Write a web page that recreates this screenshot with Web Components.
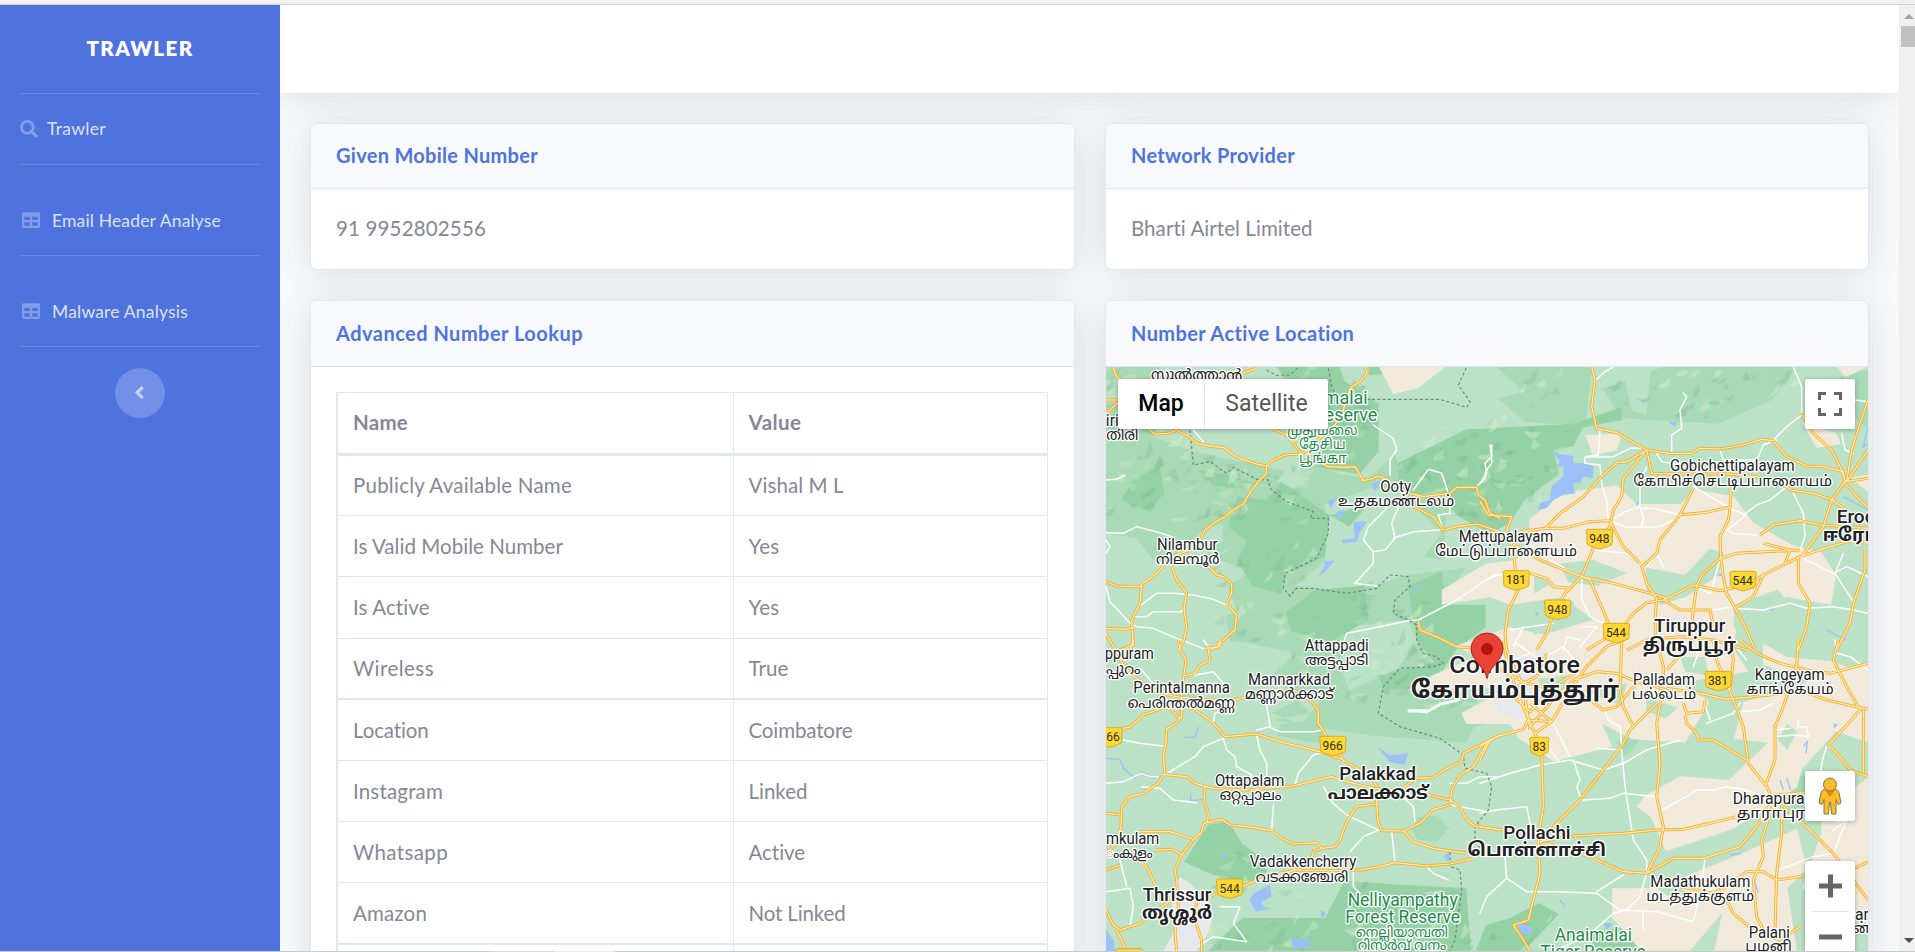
<!DOCTYPE html>
<html lang="en">
<head>
<meta charset="utf-8">
<title>Trawler</title>
<style>
html,body{margin:0;height:100%;overflow:hidden;background:#f8f9fc}
body{font:20.500px/30px Lato,"Liberation Sans",sans-serif;color:#858796}
</style>
</head>
<body>
<app-shell>
  <side-bar slot="nav"></side-bar>
  <info-card slot="cards" heading="Given Mobile Number" hw="202"><fit-text w="150">91 9952802556</fit-text></info-card>
  <info-card slot="cards" heading="Network Provider" hw="164"><fit-text w="182">Bharti Airtel Limited</fit-text></info-card>
  <info-card slot="cards" heading="Advanced Number Lookup" hw="247" tall><lookup-table></lookup-table></info-card>
  <info-card slot="cards" heading="Number Active Location" hw="224" flush tall><area-map></area-map></info-card>
</app-shell>

<template id="t-shell">
<style>
:host{display:flex;flex-direction:column;height:100vh;width:100vw}
.strip{height:4px;flex:none;background:#f3f1ef;border-bottom:1px solid #cfd4dc}
.row{flex:1;display:flex;min-height:0}
main{flex:1;min-width:0;display:flex;flex-direction:column;background:#f8f9fc;overflow:hidden}
header{height:88px;flex:none;background:#fff;box-shadow:0 3px 35px rgba(58,59,69,.15)}
.cards{display:grid;grid-template-columns:765px 764px;grid-template-rows:147px 740px;gap:30px;padding:30px 30px 0;flex:none}
.bar{width:16px;flex:none;background:#f0f0f0;display:flex;flex-direction:column;align-items:flex-end}
.bar i{display:block;border:5px solid transparent;margin-right:1px;width:0;height:0}
.up{border-bottom-color:#a3a3a3!important;border-top:0!important;margin-top:9px}
.dn{border-top-color:#505050!important;border-bottom:0!important;margin-top:auto;margin-bottom:8px}
.thumb{width:14px;height:21px;background:#c1c1c1;margin-top:7px}
.foot{height:1px;flex:none;background:linear-gradient(90deg,#c9cacd 0 490px,#d8d8da 490px 554px,#ececec 554px 615px,#c9cacd 615px)}
</style>
<div class="strip"></div>
<div class="row"><slot name="nav"></slot>
<main><header></header><div class="cards"><slot name="cards"></slot></div></main>
<div class="bar"><i class="up"></i><div class="thumb"></div><i class="dn"></i></div></div>
<div class="foot"></div>
</template>

<template id="t-side">
<style>
:host{display:flex;flex-direction:column;width:280px;flex:none;background:#4e73df;z-index:2;position:relative;font-size:17.500px;color:#dbe2f8}
.brand{height:86px;padding-bottom:2px;display:flex;align-items:center;justify-content:center;color:#fff;font-weight:800;font-size:20.500px}
hr{border:0;height:1px;width:240px;margin:0 auto;background:#6988e4;flex:none}
nav-item{height:70px}
nav-item.t{height:69px;padding-top:21px}
button{all:unset;width:50px;height:50px;border-radius:50%;background:#7190e6;margin:21px auto 0;display:flex;align-items:center;justify-content:center}
button svg{margin:-2px 2px 0 0}
</style>
<div class="brand"><fit-text w="107">TRAWLER</fit-text></div><hr>
<nav-item><svg slot="icon" style="margin:-1px 9px 0 0" width="18" height="18" viewBox="0 0 512 512" fill="#839de8"><path d="M505 442.700 405.300 343c-4.500-4.500-10.600-7-17-7H372c27.600-35.300 44-79.700 44-128C416 93.100 322.900 0 208 0S0 93.100 0 208s93.100 208 208 208c48.300 0 92.700-16.400 128-44v16.300c0 6.400 2.500 12.500 7 17l99.700 99.700c9.400 9.400 24.600 9.400 33.900 0l28.300-28.300c9.400-9.400 9.400-24.600.1-34zM208 336c-70.700 0-128-57.200-128-128 0-70.700 57.200-128 128-128 70.700 0 128 57.200 128 128 0 70.700-57.200 128-128 128z"/></svg><fit-text w="59">Trawler</fit-text></nav-item><hr>
<nav-item class="t"><svg slot="icon" style="margin:-2px 12px 0 2px" width="18" height="18" viewBox="0 0 512 512" fill="#839de8"><path d="M464 32H48C21.500 32 0 53.500 0 80v352c0 26.500 21.500 48 48 48h416c26.500 0 48-21.500 48-48V80c0-26.500-21.500-48-48-48zM224 416H64v-96h160v96zm0-160H64v-96h160v96zm224 160H288v-96h160v96zm0-160H288v-96h160v96z"/></svg><fit-text w="169">Email Header Analyse</fit-text></nav-item><hr>
<nav-item class="t"><svg slot="icon" style="margin:-2px 12px 0 2px" width="18" height="18" viewBox="0 0 512 512" fill="#839de8"><path d="M464 32H48C21.500 32 0 53.500 0 80v352c0 26.500 21.500 48 48 48h416c26.500 0 48-21.500 48-48V80c0-26.500-21.500-48-48-48zM224 416H64v-96h160v96zm0-160H64v-96h160v96zm224 160H288v-96h160v96zm0-160H288v-96h160v96z"/></svg><fit-text w="136">Malware Analysis</fit-text></nav-item><hr>
<button aria-label="Collapse"><svg width="11" height="15" viewBox="0 0 11 15"><path d="M8.700 2 3.200 7.500 8.700 13" fill="none" stroke="#c2cff5" stroke-width="3.300"/></svg></button>
</template>

<template id="t-item"><style>:host{display:flex;align-items:center;padding:0 20px;flex:none;white-space:nowrap}</style><slot name="icon"></slot><slot></slot></template>

<template id="t-card">
<style>
:host{display:flex;flex-direction:column;box-sizing:border-box;background:#fff;border:1px solid #e3e6f0;border-radius:7px;box-shadow:0 3px 35px rgba(58,59,69,.15);overflow:hidden;min-width:0}
h6{margin:0;height:64px;line-height:63px;flex:none;padding:0 25px;background:#f8f9fc;border-bottom:1px solid #e0e3f1;color:#4e73df;font-size:20px;font-weight:700}
:host([tall]) h6{height:65px;line-height:65px}
.b{padding:24px 25px}
:host([flush]) .b{padding:0}
</style><h6><fit-text></fit-text></h6><div class="b"><slot></slot></div>
</template>

<template id="t-table">
<style>
:host{display:block}
table{border-collapse:collapse;width:712px;table-layout:fixed;margin:1px 0 0 0;border-left:2px solid #e3e6f0}
th,td{border:1px solid #e3e6f0;text-align:left;padding:0 15px;box-sizing:border-box;height:61.200px;line-height:30px}
td{padding-bottom:1px}
th{height:62px;padding-bottom:2px;border-bottom:3px solid #e3e6f0}
col:first-child{width:396px}
tr.k td{border-bottom-width:2px}
</style>
<table><colgroup><col><col></colgroup><thead><tr><th><fit-text w="55">Name</fit-text></th><th><fit-text w="53">Value</fit-text></th></tr></thead><tbody></tbody></table>
</template>

<template id="t-map">
<style>
:host{display:block;position:relative;width:763px;height:584px;overflow:hidden;font-family:Roboto,sans-serif}
svg.m{display:block;width:762px;height:584px;background:#bbe2c6}
.ctl{position:absolute;background:#fff;border-radius:2.500px;box-shadow:0 1px 5px rgba(0,0,0,.3);box-sizing:border-box}
.type{left:12px;top:12px;width:210px;height:50px;display:flex;font-size:23px;line-height:50px;color:#565656;text-align:center}
.type b{font-weight:500;color:#000;width:87px;border-right:1px solid #e6e6e6;box-sizing:border-box}
.type span{flex:1}
.sq{right:14px;width:50px;height:50px;display:flex;align-items:center;justify-content:center}
.zoom{right:14px;top:494px;width:50px;height:101px}
.zoom svg{display:block}
.bg{fill:#f1e9da}.l{fill:#bbe2c6}.md{fill:#a8dab5}.dk{fill:#94d2a5}.w{fill:#9cc0f9}.u{fill:#e6e8ec}
.wr{fill:none;stroke:#fdfffd;stroke-width:4.500;stroke-linejoin:round;stroke-linecap:round}
.br{fill:none;stroke:#71867a;stroke-width:3.500;stroke-dasharray:9 7}
.rv{fill:none;stroke:#9cc0f9;stroke-width:4}
text{paint-order:stroke;stroke:#fff;stroke-width:8px;stroke-linejoin:round;fill:#202124;font-family:Roboto,"Noto Sans Tamil","Noto Sans Malayalam","Noto Sans",sans-serif;font-size:47px;text-anchor:middle}
.in{font-size:44px}
.b{font-weight:500;font-size:57px}
.bi{font-weight:700;font-size:54px}
.g{fill:#1f8a4c;font-size:54px}
.gi{fill:#1f8a4c;font-size:42px}
.sh{font-size:36px;stroke:none;font-weight:400;fill:#33301c}
</style>
<svg class="m" viewBox="78 51 2286 1752" preserveAspectRatio="none">
<defs>
<pattern id="p" width="760" height="560" patternUnits="userSpaceOnUse"></pattern>
<g id="rd">
<g><path d="M98 51 110 80 125 90M78 150H120M78 190 115 158M208 238 225 252 265 250 290 240 330 262 350 280 400 290 430 292 460 315 480 325 530 342 560 348 580 330 615 315 665 312 690 295M560 348 558 372 535 395 510 428 490 462 460 480 435 500 400 520 375 540 365 562M200 90 400 75 480 72 530 55M855 51 862 68 840 95 815 110 800 140 790 180 765 225 690 290 690 320 745 350 795 352 825 350 850 392 880 385 895 378 925 390M990 430 1030 440 1110 430 1130 412 1190 412 1195 435 1215 450 1230 490 1260 505M960 450 1010 475 1060 500 1090 540 1130 530 1190 522 1260 545M580 238 620 255 665 312M365 562 330 600 275 620 230 670 190 700 180 710 110 708 78 695M185 705 180 760 155 810 160 885 120 900M275 650 290 690 320 730 312 775 320 830 312 870 295 900M385 650 410 675 430 680 455 700 455 730 440 760 470 795 465 840 430 870 415 890 375 895M78 835 130 838 165 833M78 850 100 890 130 930M1015 815 1020 840 1080 865 1130 890 1190 895M410 880 425 893"/></g>
<g transform="translate(0 870)"><path d="M78 45 120 60 150 100 190 130 240 160 300 172 400 180 470 178 540 160 640 150 690 180 715 210 715 250 740 290 780 340 790 365M160 0 150 30 120 60M295 0 300 30 318 60 312 105 305 160 305 230 290 248 260 268 258 310 250 345 255 400M420 0 415 20 385 30 390 60 360 75 345 100 312 108M125 265 150 262 190 225 260 200 340 205 400 250 435 290 530 282 600 305 720 335 790 360 840 390 880 420 890 440M150 190 270 205 300 235M250 403 320 410 345 430 400 445 500 450 640 438 680 428 755 410 800 425 880 445 960 450 1010 415 1060 412 1110 380 1145 365 1150 340 1220 305 1260 285M250 405 235 430 190 460 150 470 125 500 123 560 110 610 78 640M375 440 372 485 385 520 383 545 370 552 365 575 340 600 305 645 285 690 290 720 295 800 285 880 290 933M370 550 425 538 450 555 500 560 575 572 610 598 640 612 710 608 725 625 700 635 695 655 620 700M180 575 270 575 340 598M225 630 275 628 310 645M160 650 200 680 225 735M78 690 120 675M78 520 120 525M890 480 893 540 905 572 970 573 1020 550 1060 508 1110 495 1115 450 1140 405 1180 380 1215 320 1230 300M890 492 830 500 800 545 780 600 765 620 725 625M1045 465 1110 480 1140 500 1160 540 1185 558 1260 570M970 573 1000 605 1060 625 1160 640M390 770 430 750 485 740 520 725 600 700 650 690 760 692 840 690 900 680 945 668 1040 678 1110 672 1180 655M78 810 100 855 120 870 180 850 200 830 290 770M110 870 140 933M350 780 345 840 365 900 365 933"/></g>
<g transform="translate(1200 0)"><path d="M335 51 345 90 335 170 350 235 410 248 500 300 570 310 635 310 660 295 720 297 790 285 845 268 880 272 920 320 980 348 1030 350 1090 365 1095 395 1164 385M500 300 440 335 410 338 360 385 310 440 240 490 195 535 120 545M495 305 430 385 425 440 400 480 390 530 345 580 330 620 305 680 255 730 220 790 200 850 170 900M195 535 250 535 330 515 390 512M500 300 515 370 600 372 750 372 830 380 900 400 940 422 1000 430 1060 450M640 415 600 495 540 570 530 610 485 650 500 700 530 745M600 495 680 487 730 475 750 472 755 400M750 475 745 510 720 560 722 620 730 680 740 730 765 775 800 840 825 900M965 190 1000 250 1055 300 1085 360 1095 395 1055 450 1030 530 965 620M1164 150 1140 220 1115 300 1100 395 1164 300M1095 400 1150 460 1164 470M1055 450 1100 480M840 555 880 525 960 512 1020 525 1164 535M0 455 25 495 95 500 80 540 100 600 105 650 115 720 85 780 75 850 80 900M0 545 80 570 170 625 240 655 305 680 400 700 530 735 560 745M390 515 430 590 480 640M305 680 330 690 360 760 390 830 400 850M150 670 200 685 220 710 270 715M320 900 370 870 430 830 460 790 500 758 550 750 640 705 720 722 800 705 850 675 960 620 1050 590 1120 570 1164 580M650 705 670 670 720 625 770 610 860 605 960 600M550 750 600 780 690 780 700 830M650 705 640 780 635 820M530 745 525 810 530 900M765 775 820 740 850 675M850 580 930 600 915 640M955 620 955 700 990 760 980 830 955 900M1155 600 1155 660 1120 760 1110 820 1070 900M440 900 500 870 600 860 700 870 800 900"/></g>
<g transform="translate(1200 870)"><path d="M0 320 50 290 130 268 145 240 215 245M70 0 80 60 120 180 165 280 185 340 190 500 180 560 175 610 180 700 145 840 100 855 130 900 150 933M0 360 30 300M165 280 215 245 270 150 320 80 380 20 430 0M150 260 210 190 280 120 350 95 410 100 470 125 560 150M300 180 330 180 370 210 410 200 470 130M150 190 215 245M425 0 420 150 430 200 460 260M530 190 450 270 430 310 370 390 300 480 230 550 180 610M545 170 530 250 540 370 530 470 550 560 540 620 500 700M560 145 660 160 740 178 870 165 960 150 1040 180 1164 208M700 0 710 60 760 180 790 260 805 370 860 440 880 480M610 190 620 220 670 215 675 180M615 225 620 250 650 280 655 300 700 300 800 360M750 0 760 60 750 150M780 0 830 40 900 70 980 90 1050 100 1164 70M955 0 950 80 910 200 885 260 885 360 855 440M1075 0 1060 60 1100 140 1140 210 1060 300 1045 315 1080 350 1110 390 1164 410M1150 210V400M0 560 70 570M180 605 275 588 430 580 530 570 610 568 690 550 770 530 840 520 880 490M200 610 330 650 430 695 500 700 580 655 670 655 780 620 830 560 870 500M880 490 845 600 850 650 820 720 830 830 850 870M905 500 905 580 890 700 885 870M600 740 700 760 740 740 800 695 850 695 890 720 960 710 970 705M900 490 990 570 1060 640 1090 680 1120 720 1164 780M720 740 760 820 820 870 900 900 960 860M530 0 550 80V110M640 0 560 90M1125 685 1164 665M880 465 975 458"/></g>
<g><path d="M1300 1040 1350 1085 1420 1010 1500 960M1400 910 1370 980 1310 1010M1260 960 1340 1000 1440 1020M1280 900 1330 1010 1350 1140"/></g>
</g>
</defs>
<g transform="translate(78 48) scale(1.460 1.119)">
<path class="md" d="M0 0H110L140 100 100 190 180 230 240 225 330 262 400 240 480 290 540 300 600 230 760 100 860 70 800 0H1000L985 150 960 210 860 290 700 400 690 520 540 480 550 590 620 560 740 540 690 640 650 780 700 880 760 960 740 1010 540 990 440 970 345 950 420 930 340 830 390 770 280 740 210 740 200 690 270 660 250 590 300 550 210 510 200 440 110 540 60 460 0 450ZM1020 60 1150 0H1420L1370 90 1260 155 1180 150 1060 140ZM1480 40 1568 10V170L1520 120ZM400 960 440 900 420 880 340 930Z"/>
<path class="l" d="M180 80 240 90 330 210 400 240 400 290 330 270 180 230ZM0 40 60 20 80 100 0 130ZM560 100 740 60 790 70 860 150 980 160 740 170 600 260ZM1060 0H1120L1110 130 1080 120ZM450 370 540 330 600 330 690 450 640 530 520 590 450 600 390 590 450 520ZM200 440 240 420 240 470 205 500ZM370 280 420 300 390 330 350 310ZM0 470 110 530 210 540 240 640 260 760 0 760ZM500 700 620 680 640 740 600 810 500 870 480 800Z"/>
<path class="dk" d="M350 0H480L490 40 560 100 560 230 520 290 430 270 460 160 380 60ZM270 350 330 360 360 310 460 400 450 510 370 560 360 610 300 590 270 520 290 470 250 430ZM600 330 600 260 740 170 960 155 1060 110 1060 145 980 165 960 215 920 225 930 290 860 360 830 420 790 450 720 400 690 330 630 350ZM620 590 690 550 700 640 780 640 780 700 720 760 690 820 640 740ZM430 600 530 590 540 680 460 740 380 710 370 660ZM60 300 110 270 120 340 90 390 30 360ZM540 0 590 0 580 20 540 25ZM560 830 690 790 680 860 570 870ZM460 400 540 370 500 430ZM190 280 250 290 270 330 220 320ZM210 1230 250 1220 280 1280 330 1330 330 1370 260 1390 230 1370 160 1330ZM490 1380 600 1390 740 1400 750 1568H210L280 1480 450 1480ZM830 1480 890 1440 930 1470 860 1568H760L780 1500ZM1000 1520 1080 1500 1100 1568H1000Z"/>
<path class="md" d="M600 880 700 910 770 910 780 960 700 990 580 950 560 900ZM360 960 430 950 470 1020 350 990ZM640 1210 680 1205 705 1240 680 1275 640 1270 628 1240ZM1050 1010 1080 980 1110 980 1080 1030 1060 1050ZM1390 1110 1460 1090 1480 1160 1410 1190ZM140 870 190 860 200 900 150 920Z"/>
<path class="bg" d="M870 410 940 340 1050 320 1090 370 1180 370 1210 330 1290 350 1330 420 1410 480 1470 500 1500 560 1490 640 1400 620 1300 640 1290 760 1320 820 1180 850 1240 900 1190 1010 1080 1000 1020 960 1040 1020 920 1060 850 1000 830 960 740 960 730 930 830 860 620 870 670 830 760 780 720 750 750 735 830 700 900 720 1000 680 940 620 830 640 790 620 690 640 690 600 780 530 840 520 870 470ZM1310 900 1400 870 1470 830 1568 800V1010L1500 980 1430 1080 1420 1130 1360 1180 1290 1240 1200 1280 1150 1300 1120 1210 1090 1180 1110 1150 1180 1100 1280 1110 1360 1010 1290 1000ZM1150 1390 1300 1310 1420 1240 1440 1350 1400 1400 1420 1568H1250L1270 1440ZM1040 1400 1130 1400 1190 1450 1240 1410 1270 1460 1200 1568H1100L1040 1480ZM1470 1200 1568 1100V1500L1520 1450 1430 1400 1470 1250ZM985 185 1060 180 1050 225 1000 240ZM560 0H700L640 60 590 75ZM1430 150 1500 180 1510 210 1460 220ZM1500 0H1568L1520 30ZM1530 300 1568 290V340ZM1350 660 1300 640 1320 700 1390 740 1568 830 1480 860 1350 800Z"/>
<path class="l" d="M930 530 1000 520 1070 555 1010 590 950 580ZM1110 540 1190 560 1240 490 1270 500 1260 560 1190 620 1140 640 1110 600ZM850 640 960 630 970 690 880 720ZM1290 640 1380 600 1400 630 1500 680 1568 640V760L1480 790 1400 780 1290 700ZM980 870 1070 850 1060 910ZM1110 890 1175 915 1150 945 1110 925ZM1290 840 1400 830 1380 870 1310 900ZM880 560 920 580 880 610ZM870 840 950 830 940 870ZM1180 780 1230 780 1240 830 1190 820ZM1380 1000 1400 960 1420 980 1400 1030Z"/>
</g>
<path class="u" d="M300 1580 330 1600 370 1640 400 1700 380 1760 350 1803H250L290 1730 270 1640ZM1270 950 1400 890 1370 1010 1320 1110 1250 1080ZM1770 800 1830 800 1810 860 1770 850Z"/>
<path fill="url(#p)" d="M78 51H260L340 280 540 380 680 320 860 350 740 500 750 600 680 720 940 740 1060 760 1060 990 1220 1050 1240 1130 1140 1170 900 1160 720 1100 640 960 400 830 400 620 240 600 78 540ZM620 51H780L880 130 860 340 720 320ZM940 400 960 330 1090 230 1220 200 1360 180 1320 120 1240 60 1500 60 1480 240 1380 460 1260 560 1100 480ZM1560 130 1660 60 2200 60 2050 200 1960 190 1780 230ZM400 1560 480 1500 560 1590 560 1620 900 1590 1170 1630 1180 1803H380ZM1200 1740 1380 1660 1430 1690 1330 1803H1200Z"/>
<g class="w"><path d="M1420 303 1440 312 1480 318 1480 340 1520 340 1540 350 1538 385 1510 380 1500 400 1480 400 1485 430 1450 435 1420 450 1400 475 1375 480 1380 460 1410 450 1415 410 1450 380 1450 350 1430 350 1440 335ZM740 455 770 445 755 475ZM770 485 790 480 785 505 770 500ZM820 515 860 515 840 545 830 575 790 580 785 570 825 565ZM730 635 765 630 735 665 715 680 735 645ZM875 400 900 395 885 425ZM1770 215 1790 215 1785 230 1770 222ZM890 1190 930 1215 985 1210 975 1245 930 1235ZM520 1630 570 1605 575 1640 545 1655 550 1670 575 1675 530 1685 508 1652ZM630 1760 660 1770 685 1765 690 1790 640 1795ZM78 1740 100 1770 105 1803H78ZM1308 1720 1350 1728 1360 1755 1325 1748ZM1570 1720 1600 1720 1580 1740ZM1090 1520 1110 1505 1105 1535ZM720 1680 740 1690 725 1705ZM2260 1120 2275 1125 2262 1135ZM740 1005 760 1012 745 1020ZM1670 455 1682 458 1668 468ZM1916 670 1930 672 1918 680ZM2070 772 2085 776 2073 785ZM1365 785 1377 790 1368 798ZM420 1505 440 1515 424 1525Z"/></g>
<path class="rv" d="M78 1225 120 1228 130 1255 165 1285 185 1265 215 1285 240 1280M312 1162H345L355 1130M332 1330V1352L370 1348M1000 730 1025 705M2364 230 2350 290 2364 280M2290 440 2364 480M2170 1190 2182 1175 2178 1210M2100 1290 2110 1320M2120 1285 2132 1320M1950 1515 1985 1510M2020 1580 2035 1630M1440 1650 1455 1670M2240 840 2300 870"/>
<g class="wr">
<path d="M78 548 130 550 170 530 240 548 275 560 270 600M78 390 110 388 135 375M78 570 90 590 78 610M78 710 90 755 150 820 170 830 220 835 290 865 370 895M165 800 200 800 220 785 300 785 312 780M170 775 230 730 280 730 340 735 400 748 440 765M1235 285 1235 340 1220 360 1215 385 1190 410M880 225 940 265 950 300 930 330 930 375M1000 420 1045 358 1085 370 1105 430 1110 490 1075 495 1090 540M920 475 865 530 850 570 880 605 880 640 825 700 890 708M955 470 935 520 945 565 915 600 880 605M940 565 1000 545 1080 540M1015 810 1130 750 1240 675 1260 675M715 905 790 880 800 850 850 840 900 830 970 815 1010 810M340 240 370 275"/>
<path transform="translate(0 870)" d="M180 85 210 120 240 150M385 20 370 0M130 300 180 310 250 318M78 430 130 425 185 400 210 410 235 410M255 405 310 370 345 350 370 320 430 295 440 330 465 350 470 380 515 405 510 430M400 245 405 220 450 195M555 165 570 260 530 270M530 285 540 330 560 370 560 430M570 262 600 275 700 275 725 270M645 435 655 400 700 345 720 340M730 440 760 490 800 525 895 570 850 590 810 635M950 455 1000 500 1005 545M935 575 945 665M580 495 575 570M185 440 240 445 280 480 350 488M985 215 1040 215 1080 190 1130 180M1110 430 1160 430 1200 410 1260 410M1115 495 1220 515M78 755 150 745 160 800 150 860M120 660 140 740M420 800 480 800 460 850 500 905 400 890 360 915M820 690 820 740 840 760M1040 680 1060 700 1105 720M985 210 1040 210M345 105 400 95 430 130"/>
<path transform="translate(1200 0)" d="M610 130 620 140 600 180 605 235 575 255 575 305M400 51 375 65 345 92M940 51 965 110 965 195 920 230 880 270M360 240 355 315 315 320V340L360 345 365 400 380 450 385 510 435 530 480 532 540 530 600 500M315 322 400 320 450 295 490 295M500 350 480 400 480 470 435 485 395 510M480 470 490 505 485 530M480 475 520 475 600 495M640 410 760 480 800 495 740 540 760 550 830 555M790 495 830 465 870 450 920 410M940 430 970 490 975 560 960 600M720 300 730 330 830 330 850 285 875 275M210 630 270 665 305 680 305 750 330 800 390 830M0 400 20 370 15 340 35 320 30 285M110 660 40 680 0 700M340 600 440 610 480 640M500 650 530 610 550 650M720 630 690 730 650 710M960 620 1060 670 1100 650 1164 680M1065 670 1090 610M1065 670 1120 755M765 775 850 780 930 760 980 775 1060 770 1120 780 1164 790M700 780 760 770M530 310 545 335 575 340M870 275 890 270M1085 250 1095 300 1120 310M1125 150 1164 155M90 840 150 830 220 820M130 830 100 890M310 830 350 830 300 890M250 900 260 860 300 870"/>
<path transform="translate(1200 870)" d="M0 430 90 400 180 375 270 360 370 390 430 370 500 330 600 300M215 240 250 310 270 350M280 360 300 420 290 440 305 480 390 475 430 460 530 470M185 300 240 365M350 325 425 330 435 440 460 600 500 660V700M0 520 50 510 140 500 150 550M545 510 620 470 650 450 700 450 740 440 800 450 840 465M680 250 760 220 780 190M770 215 840 210 880 190M890 270 930 265M885 290 940 285 985 290M955 240 955 260 980 260 985 290M1040 320 1030 350 1020 400M1065 0 1070 40 1110 50 1164 90M75 650 80 715 140 755 230 755 350 760 420 810 530 815 640 845 660 760 740 730M80 715 20 770 0 820M350 755 430 705M500 700 480 770 440 810 400 820 320 890 220 933M490 810 490 870M675 655 670 700 640 740M895 690 1000 650 1060 640 1100 540 1060 570M370 200 385 240 420 260 425 320M680 0 650 50 640 80M1100 540 1070 545M880 520 900 490M110 10 180 60 250 20 300 80M20 30 100 60 150 40M670 180 690 240M750 0 800 60M-215 210-160 218-120 195-60 180"/>
</g>
<path class="br" d="M560 60 590 76 630 75 655 51M745 55 755 110 765 130M860 148 1080 148 1160 172 1170 155 1135 105 1160 51M330 240 340 345 390 335 440 370 460 352 530 388 565 390 570 415 620 455 700 485 690 505 745 505 745 550 710 625 615 670 610 715 630 738 650 715 700 715 800 730 890 715 930 675 985 680 990 710 945 750 940 790 985 810 1010 825 1010 870 1030 910 1070 920 1090 940 1060 950 960 955 910 1010 895 1090 960 1130 1080 1165 1150 1215 1155 1255 1220 1270 1235 1310 1225 1380 1185 1430 1185 1470 1210 1510 1110 1505 1110 1550 1140 1560 1145 1620 1125 1770 1110 1803"/>
<use href="#rd"/>
<g class="y2"></g>
<g fill="#fdd835" stroke="#d9ac22" stroke-width="3">
<path id="s0" d="M1525 538h68q6 0 6 6l-2 12v22q0 8-10 10l-28 9-28-9q-10-2-10-10v-22l-2-12q0-6 6-6z"/>
<use href="#s0" x="-250" y="124"/><use href="#s0" x="430" y="126"/><use href="#s0" x="-126" y="212"/><use href="#s0" x="50" y="282"/><use href="#s0" x="356" y="426"/><path d="M1355 1162h46q6 0 6 6l-2 12v20q0 8-8 10l-19 9-19-9q-8-2-8-10v-20l-2-12q0-6 6-6z"/><use href="#s0" x="-800" y="621"/><use href="#s0" x="-1110" y="1049"/><use href="#s0" x="-1472" y="595"/><use href="#s0" x="-1412" y="1258"/>
</g>
<text class="sh" x="1558" y="579">948</text><text class="sh" x="1308" y="703">181</text><text class="sh" x="1988" y="704">544</text><text class="sh" x="1432" y="792">948</text><text class="sh" x="1608" y="861">544</text><text class="sh" x="1914" y="1006">381</text><text class="sh" x="1378" y="1203">83</text><text class="sh" x="758" y="1200">966</text><text class="sh" x="449" y="1628">544</text><text class="sh" x="99" y="1174">66</text>
<text class="in" x="350" y="90" textLength="274">സുൽത്താൻ</text>
<text x="97" y="227">iri</text><text class="in" x="127" y="270" textLength="96">തിരി</text>
<text class="g" x="797" y="162">malai</text><text class="g" x="813" y="214">eserve</text>
<text class="gi" x="727" y="256" textLength="212">முதுமலை</text><text class="gi" x="727" y="298" textLength="140">தேசிய</text><text class="gi" x="729" y="339" textLength="144">பூங்கா</text>
<text x="947" y="427" textLength="92">Ooty</text><text class="in" x="948" y="469" textLength="350">உதகமண்டலம்</text>
<text x="322" y="599" textLength="182">Nilambur</text><text class="in" x="323" y="641" textLength="190">നിലമ്പൂർ</text>
<text x="1278" y="576" textLength="284">Mettupalayam</text><text class="in" x="1278" y="618" textLength="426">மேட்டுப்பாளையம்</text>
<text x="1957" y="364" textLength="374">Gobichettipalayam</text><text class="in" x="1958" y="407" textLength="596">கோபிச்செட்டிப்பாளையம்</text>
<text class="b" x="2270" y="519" style="text-anchor:start">Erode</text><text class="bi" x="2228" y="574" style="text-anchor:start">ஈரோடு</text>
<text class="b" x="1829" y="845" textLength="214">Tiruppur</text><text class="bi" x="1828" y="902" textLength="280">திருப்பூர்</text>
<text x="770" y="903" textLength="192">Attappadi</text><text class="in" x="770" y="945" textLength="190">അട്ടപ്പാടി</text>
<text x="627" y="1006" textLength="246">Mannarkkad</text><text class="in" x="628" y="1048" textLength="266">മണ്ണാർക്കാട്</text>
<text x="305" y="1030" textLength="290">Perintalmanna</text><text class="in" x="304" y="1073" textLength="322">പെരിന്തൽമണ്ണ</text>
<text x="148" y="927" textLength="146">ppuram</text><text class="in" x="130" y="971">പ്പുറം</text>
<text x="1304" y="968" style="font-size:74px;font-weight:500" textLength="392">Coimbatore</text><text class="bi" x="1305" y="1043" textLength="626" style="font-size:71px">கோயம்புத்தூர்</text>
<text x="1752" y="1004" textLength="186">Palladam</text><text class="in" x="1752" y="1046" textLength="194">பல்லடம்</text>
<text x="2129" y="989" textLength="210">Kangeyam</text><text class="in" x="2130" y="1031" textLength="262">காங்கேயம்</text>
<text x="509" y="1308" textLength="208">Ottapalam</text><text class="in" x="512" y="1350" textLength="186">ഒറ്റപ്പാലം</text>
<text class="b" x="893" y="1291" textLength="230">Palakkad</text><text class="bi" x="893" y="1347" textLength="300">പാലക്കാട്</text>
<text x="158" y="1483" textLength="160">mkulam</text><text class="in" x="148" y="1525" textLength="140">ംകുളം</text>
<text x="669" y="1552" textLength="320">Vadakkencherry</text><text class="in" x="666" y="1595" textLength="278">വടക്കഞ്ചേരി</text>
<text class="b" x="291" y="1652" textLength="206">Thrissur</text><text class="bi" x="291" y="1707" textLength="210">തൃശ്ശൂർ</text>
<text class="b" x="1371" y="1466" textLength="202">Pollachi</text><text class="bi" x="1370" y="1519" textLength="416">பொள்ளாச்சி</text>
<text x="1861" y="1610" textLength="300">Madathukulam</text><text class="in" x="1861" y="1652" textLength="324">மடத்துக்குளம்</text>
<text x="1958" y="1362" style="text-anchor:start">Dharapuram</text><text class="in" x="1970" y="1405" style="text-anchor:start" textLength="250">தாராபுரம்</text>
<text class="g" x="968" y="1667" textLength="330">Nelliyampathy</text><text class="g" x="968" y="1719" textLength="344">Forest Reserve</text><text class="gi" x="966" y="1762" textLength="276">നെല്ലിയാമ്പതി</text><text class="gi" x="966" y="1800" textLength="266">റിസർവ് വനം</text>
<text class="g" x="1540" y="1772" textLength="232">Anaimalai</text><text class="g" x="1539" y="1825" textLength="316">Tiger Reserve</text>
<text x="2068" y="1763" textLength="124">Palani</text><text class="in" x="2066" y="1804" textLength="140">பழனி</text>
<text x="2346" y="1709">ar</text><text class="in" x="2345" y="1750">ன்</text>
<path d="M1221 986c-4-32-48-56-48-89a48 48 0 0 1 96 0c0 33-44 57-48 89z" fill="#ea4335" stroke="#b4231a" stroke-width="3"/><circle cx="1221" cy="897" r="18" fill="#b31412"/>
</svg>
<div class="ctl type"><b>Map</b><span>Satellite</span></div>
<div class="ctl sq" style="top:12px"><svg width="24" height="24" viewBox="0 0 24 24" fill="none" stroke="#666" stroke-width="3"><path d="M1.500 8V1.500H8M16 1.500H22.500V8M22.500 16V22.500H16M8 22.500H1.500V16"/></svg></div>
<div class="ctl sq" style="top:404px"><svg width="24" height="38" viewBox="0 0 24 38"><path d="M8 12C4 12 3 15 2.500 18L1 26l3 1.500 2-5V37h4.500l1-12h1l1 12H18V22.500l2 5 3-1.500-1.500-8C21 15 20 12 16 12z" fill="#fbbc2c" stroke="#857443"/><path d="M7 13.500 12 20l5-6.500z" fill="#e58424"/><circle cx="12" cy="7.500" r="6.500" fill="#fbbc2c" stroke="#857443"/></svg></div>
<div class="ctl zoom"><svg width="50" height="90" viewBox="0 0 50 90" fill="none"><path d="M14 25H37M25.500 13.500v23M14 76H37" stroke="#666" stroke-width="5"/><path d="M7 50.500H44" stroke="#e6e6e6"/></svg></div>
</template>

<script>
const stamp = (el, id) => {
  const r = el.attachShadow({mode: 'open'});
  r.append(document.getElementById(id).content.cloneNode(true));
  return r;
};
/* Text tracked to a target width. */
class FitText extends HTMLElement {
  constructor() {
    super();
    this.attachShadow({mode: 'open'}).innerHTML = '<style>:host{display:inline-block;white-space:nowrap}</style><slot></slot>';
  }
  static get observedAttributes() { return ['w']; }
  attributeChangedCallback() { this.fit(); }
  connectedCallback() { this.fit(); }
  fit() {
    const w = +this.getAttribute('w'), n = this.textContent.length;
    if (!w || !n || !this.isConnected) return;
    this.style.letterSpacing = '0px';
    const cur = this.getBoundingClientRect().width;
    if (cur) this.style.letterSpacing = ((w - cur) / n).toFixed(3) + 'px';
  }
}
class AppShell extends HTMLElement { constructor() { super(); stamp(this, 't-shell'); } }
class NavItem extends HTMLElement { constructor() { super(); stamp(this, 't-item'); } }
class SideBar extends HTMLElement { constructor() { super(); stamp(this, 't-side'); } }
class InfoCard extends HTMLElement {
  constructor() { super(); stamp(this, 't-card'); }
  connectedCallback() {
    const t = this.shadowRoot.querySelector('h6 fit-text');
    t.textContent = this.getAttribute('heading');
    t.setAttribute('w', this.getAttribute('hw'));
  }
}
class LookupTable extends HTMLElement {
  constructor() {
    super();
    const rows = [['Publicly Available Name', 219, 'Vishal M L', 95], ['Is Valid Mobile Number', 210, 'Yes', 31],
      ['Is Active', 77, 'Yes', 31], ['Wireless', 81, 'True', 40, 1], ['Location', 76, 'Coimbatore', 104],
      ['Instagram', 90, 'Linked', 59], ['Whatsapp', 95, 'Active', 57], ['Amazon', 74, 'Not Linked', 97, 1], ['', 0, '', 0]];
    stamp(this, 't-table').querySelector('tbody').innerHTML = rows.map(([a, w, b, v, k]) =>
      `<tr${k ? ' class="k"' : ''}><td><fit-text w="${w}">${a}</fit-text></td><td><fit-text w="${v}">${b}</fit-text></td></tr>`).join('');
  }
}
class AreaMap extends HTMLElement {
  constructor() {
    super();
    const r = stamp(this, 't-map');
    /* Light centre line laid over the same road geometry. */
    const g = r.querySelector('.y2');
    r.querySelectorAll('#rd > g').forEach(s => {
      const c = s.cloneNode(true);
      c.firstElementChild.setAttribute('style', 'fill:none;stroke:#ffedb8;stroke-width:3.500;stroke-linejoin:round');
      g.append(c);
    });
    r.querySelectorAll('#rd path').forEach(p => p.setAttribute('style', 'fill:none;stroke:#f8b02a;stroke-width:9;stroke-linejoin:round'));
    /* Labels stretch their glyphs so that Indic clusters stay joined. */
    r.querySelectorAll('text[textLength]').forEach(t => t.setAttribute('lengthAdjust', 'spacingAndGlyphs'));
    /* Hill shading: small slanted facets, repeated as a tile. */
    let s = 7;
    const rnd = () => (s = s * 16807 % 2147483647) / 2147483647;
    let out = '';
    for (let i = 0; i < 150; i++) {
      const x = 30 + rnd() * 660, y = 40 + rnd() * 480, a = -0.5 + (rnd() - .5) * 1.6, L = 18 + rnd() * 42, h = 8 + rnd() * 18;
      const dx = Math.cos(a) * L, dy = Math.sin(a) * L;
      const p = [[x, y], [x + dx, y + dy], [x + dx * .6 - dy / L * h, y + dy * .6 + dx / L * h], [x + dx * .2 - dy / L * h * .6, y + dy * .2 + dx / L * h * .6]];
      const k = rnd();
      out += `<path d="M${p.map(q => q.map(v => v.toFixed(0)).join(' ')).join('L')}Z" fill="${k < .65 ? '#66a980' : '#d0edc8'}" opacity="${(k < .65 ? .1 + rnd() * .18 : .2 + rnd() * .35).toFixed(2)}"/>`;
    }
    r.querySelector('#p').innerHTML = out;
  }
}
customElements.define('app-shell', AppShell);
customElements.define('nav-item', NavItem);
customElements.define('side-bar', SideBar);
customElements.define('info-card', InfoCard);
customElements.define('lookup-table', LookupTable);
customElements.define('area-map', AreaMap);
customElements.define('fit-text', FitText);
document.querySelectorAll('info-card').forEach(c => c.connectedCallback());
</script>
</body>
</html>
